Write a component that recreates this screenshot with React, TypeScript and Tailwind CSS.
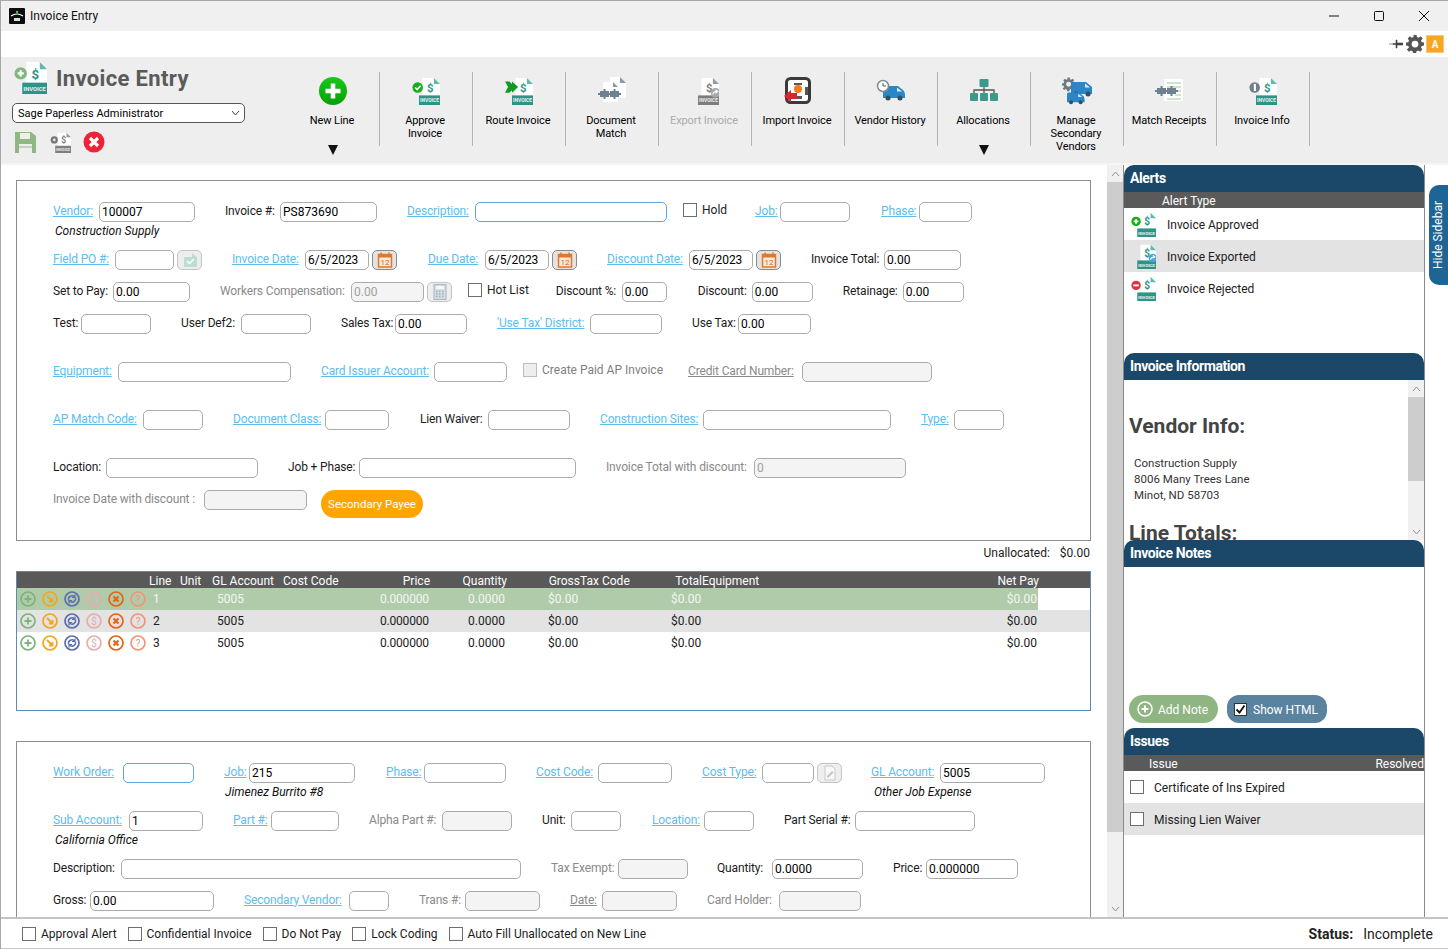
import React from "react";

const FONT = "[font-family:Roboto,'Liberation_Sans',sans-serif]";

function Doc({ badge, gray, size = 28 }: { badge?: React.ReactNode; gray?: boolean; size?: number }) {
  const c = gray ? "#7d7d7d" : "#2f9488";
  return (
    <svg width={size} height={size} viewBox="0 0 32 32">
      <path d="M12 1h13l7 7v15H12z" fill="#fff" />
      <path d="M25 1l7 7h-7z" fill={gray ? "#9a9a9a" : "#5fb8ab"} />
      <text x="17" y="17" fontSize="13" fontWeight="700" fill={c} fontFamily="Roboto">$</text>
      <rect x="8" y="21" width="24" height="11" fill={c} />
      <text x="20" y="29" fontSize="5.6" fontWeight="700" fill="#e8f4f2" textAnchor="middle" fontFamily="Roboto">INVOICE</text>
      {badge}
    </svg>
  );
}

const plusBadge = (col: string) => (
  <g>
    <circle cx="6.5" cy="12" r="6" fill={col} />
    <path d="M3.5 12h6M6.5 9v6" stroke="#fff" strokeWidth="2.2" />
  </g>
);
const checkBadge = (
  <g>
    <circle cx="6.5" cy="12" r="6" fill="#12b012" />
    <path d="M3.5 12l2.4 2.4 4-4.4" stroke="#fff" strokeWidth="2" fill="none" />
  </g>
);
const minusBadge = (
  <g>
    <circle cx="6.5" cy="12" r="6" fill="#e0323c" />
    <path d="M3 12h7" stroke="#fff" strokeWidth="2.4" />
  </g>
);
const routeBadge = (
  <path d="M0 5h5l3 3V5l7 6.500L8 18v-3l-3 3H0l3.500-6.500z" fill="#109a20" />
);
const infoBadge = (
  <g>
    <circle cx="6.5" cy="12" r="6" fill="#6f7f8c" />
    <rect x="5.5" y="8" width="2.4" height="8" fill="#fff" />
  </g>
);
const exportArrow = (col: string) => (
  <g>
    <circle cx="28" cy="18" r="5.5" fill={col} />
    <path d="M25 20c.5-3 2.500-3.500 4.500-3.500M28 14.500l2.500 2-2.500 2" stroke="#fff" strokeWidth="1.300" fill="none" />
  </g>
);

function Puzzle({ x = 0, y = 0 }: { x?: number; y?: number }) {
  return (
    <g transform={`translate(${x} ${y})`} fill="#6f8090">
      <path d="M0 2h3.500v-2h2v2h3.500v2h2v2h-2v2h-3.500v2h-2v-2h-3.500v-2h-2v-2h2z" />
      <path d="M10 2h3.500v-2h2v2h3.500v2h2v2h-2v2h-3.500v2h-2v-2h-3.500z" />
    </g>
  );
}

function DocMatch() {
  return (
    <svg width="28" height="28" viewBox="0 0 28 28">
      <path d="M12 0h10l6 6v15H12z" fill="#fff" />
      <path d="M22 0l6 6h-6z" fill="#8a9aa6" />
      <path d="M5 5h10l5 5v15H5z" fill="#fff" />
      <path d="M15 5l5 5h-5z" fill="#8a9aa6" />
      <Puzzle x={2} y={12} />
    </svg>
  );
}
function ImportIcon() {
  return (
    <svg width="28" height="28" viewBox="0 0 28 28">
      <rect x="2.500" y="1.500" width="23" height="24" rx="4" fill="#fff" stroke="#3a3a3a" strokeWidth="3" />
      <path d="M10 6h8v4h6v8h-6v4h-8z" fill="#3a3a3a" opacity="0.85" />
      <rect x="8" y="8" width="13" height="11" fill="#fff" />
      <circle cx="14" cy="12" r="4" fill="#f07d1a" />
      <path d="M0 19l7-6v3h6v6H7v3z" fill="#d8262c" />
    </svg>
  );
}
function Van({ x = 0, y = 0, s = 1 }: { x?: number; y?: number; s?: number }) {
  return (
    <g transform={`translate(${x} ${y}) scale(${s})`}>
      <path d="M0 4q0-2 2-2h13l6 5 1 3v4H0z" fill="#2a86c6" />
      <path d="M14 3.500l5 4h-5z" fill="#d6edf8" />
      <circle cx="5" cy="14" r="2.500" fill="#33505f" />
      <circle cx="17" cy="14" r="2.500" fill="#33505f" />
    </g>
  );
}
function VendorHist() {
  return (
    <svg width="30" height="28" viewBox="0 0 30 28">
      <Van x={7} y={7} />
      <circle cx="7" cy="9" r="5.500" fill="#fff" stroke="#7f8c92" strokeWidth="1.500" />
      <path d="M7 6v3h3" stroke="#555" strokeWidth="1" fill="none" />
    </svg>
  );
}
function Alloc() {
  return (
    <svg width="28" height="24" viewBox="0 0 28 24">
      <g fill="#3c9a8c">
        <rect x="9.500" y="0" width="9" height="8" rx="1" />
        <rect x="0" y="14" width="8" height="8" rx="1" />
        <rect x="10" y="14" width="8" height="8" rx="1" />
        <rect x="20" y="14" width="8" height="8" rx="1" />
      </g>
      <path d="M14 8v6M4 14v-3h20v3" stroke="#555" strokeWidth="1.300" fill="none" />
    </svg>
  );
}
function Gear({ size, col }: { size: number; col: string }) {
  return (
    <svg width={size} height={size} viewBox="0 0 24 24">
      <path d="M10 1h4l.6 3 2.300 1 2.600-1.700 2.800 2.800L20 8.700l1 2.300 3 .6v3.800l-3 .6-1 2.300 1.700 2.600-2.800 2.800-2.600-1.700-2.300 1-.6 3h-4l-.6-3-2.300-1-2.600 1.700-2.800-2.800L4 18.300 3 16l-3-.6v-3.800l3-.6 1-2.300L2.300 6.100l2.800-2.800L7.700 5l2.300-1z" fill={col} transform="translate(0 -1.500)" />
      <circle cx="12" cy="12" r="4.500" fill="#fff" />
    </svg>
  );
}
function SecVendors() {
  return (
    <svg width="30" height="28" viewBox="0 0 30 28">
      <g transform="translate(0 0) scale(0.55)">
        <path d="M10 1h4l.6 3 2.300 1 2.600-1.700 2.800 2.800L20 8.700l1 2.300 3 .6v3.800l-3 .6-1 2.300 1.700 2.600-2.800 2.800-2.600-1.700-2.300 1-.6 3h-4l-.6-3-2.300-1-2.600 1.700-2.800-2.800L4 18.300 3 16l-3-.6v-3.800l3-.6 1-2.300L2.300 6.100l2.800-2.800L7.700 5l2.300-1z" fill="#6d7a80" />
        <circle cx="12" cy="13" r="4.500" fill="#eee" />
      </g>
      <Van x={9} y={3} />
      <Van x={5} y={14} s={0.8} />
    </svg>
  );
}
function Receipts() {
  return (
    <svg width="30" height="26" viewBox="0 0 30 26">
      <rect x="9" y="1" width="19" height="22" fill="#fff" />
      <g stroke="#9ccb94" strokeWidth="1.200">
        <path d="M12 5h14M12 9h14M20 13h6M20 17h6M12 21h14" />
      </g>
      <Puzzle x={2} y={8} />
    </svg>
  );
}

function Tool({ label, dim, arrow, children }: { label: React.ReactNode; dim?: boolean; arrow?: boolean; children: React.ReactNode }) {
  return (
    <div className="relative w-[93px] h-[74px] shrink-0 border-r border-[#b4b4b4] flex flex-col items-center text-center">
      <div className="h-[28px] mt-[5px] flex items-center justify-center">{children}</div>
      <div className={`mt-[9px] leading-[13px] pl-[2px] pr-[4px] text-[11px] tracking-[-0.1px] ${dim ? "text-[#ababab]" : "text-black"}`}>{label}</div>
      {arrow && (
        <svg className="absolute left-[41px] top-[73px]" width="10" height="10" viewBox="0 0 10 10">
          <path d="M0 0h10L5 10z" fill="#111" />
        </svg>
      )}
    </div>
  );
}

function Field({ m, lw, label, link, iw, value, disabled, focus, under }: {
  m?: string; lw: string; label: string; link?: boolean; iw: string; value?: string; disabled?: boolean; focus?: boolean; under?: boolean;
}) {
  return (
    <div className={`flex items-center h-5 shrink-0 ${m ?? ""}`}>
      <span className={`${lw} pb-[2px] whitespace-nowrap shrink-0 tracking-[-0.15px] ${link ? "text-[#5cbdee] underline" : disabled ? "text-[#8a8a8a]" : "text-[#1c1c1c]"} ${under ? "underline" : ""}`}>{label}</span>
      <input
        readOnly
        value={value ?? ""}
        className={`${iw} h-5 shrink-0 rounded-[5px] border px-[2px] outline-none ${FONT} text-[12px] ${focus ? "border-[#5ea6dd]" : "border-[#ababab]"} ${disabled ? "bg-[#f4f4f4] text-[#a0a0a0]" : "bg-white text-black"}`}
      />
    </div>
  );
}

function IconBtn({ m, kind }: { m: string; kind: "po" | "cal" | "calc" | "doc" }) {
  return (
    <div className={`${m} w-[25px] h-5 shrink-0 rounded-[5px] border flex items-center justify-center ${kind === "cal" ? "border-[#8a8a8a] bg-[#e4e4e4]" : "border-[#c4c4c4] bg-[#eeeeee]"}`}>
      {kind === "cal" && (
        <svg width="16" height="16" viewBox="0 0 16 16">
          <rect x="1.500" y="2.500" width="13" height="12.500" fill="#fbe9dc" stroke="#e2772b" strokeWidth="1.500" />
          <rect x="1" y="2" width="14" height="3.500" fill="#e2772b" />
          <path d="M4 0.500v3M12 0.500v3" stroke="#e2772b" strokeWidth="1.500" />
          <text x="8" y="13" fontSize="8" fill="#c9651f" textAnchor="middle" fontFamily="Roboto">12</text>
        </svg>
      )}
      {kind === "po" && (
        <svg width="16" height="16" viewBox="0 0 16 16">
          <path d="M2 5h8V1l5 4v10H2z" fill="#bcdcd6" />
          <path d="M5 9l2.500 2.500L12 7" stroke="#fff" strokeWidth="1.500" fill="none" />
        </svg>
      )}
      {kind === "calc" && (
        <svg width="14" height="16" viewBox="0 0 14 16">
          <rect x="1" y="0.500" width="12" height="15" fill="#d5dde2" stroke="#a8b6c0" />
          <rect x="3" y="2" width="8" height="3" fill="#f4f6f7" />
          <path d="M3 7.500h8M3 10h8M3 12.500h8" stroke="#9fb0bb" strokeDasharray="1.500 1.500" strokeWidth="1.500" />
        </svg>
      )}
      {kind === "doc" && (
        <svg width="14" height="16" viewBox="0 0 14 16">
          <path d="M2 1h7l3 3v11H2z" fill="#f8f8f8" stroke="#c8c8c8" />
          <path d="M4 11l5-5 1.500 1.500-5 5H4z" fill="#c4c4c4" />
        </svg>
      )}
    </div>
  );
}

function Check({ m, label, dim, box = "border-[#6e6e6e] bg-white", lp = "" }: { m?: string; label?: string; dim?: boolean; box?: string; lp?: string }) {
  return (
    <div className={`flex items-center shrink-0 ${m ?? ""}`}>
      <span className={`w-[14px] h-[14px] border block shrink-0 ${box}`} />
      {label && <span className={`ml-[5px] whitespace-nowrap ${lp} ${dim ? "text-[#7f7f7f]" : "text-[#1c1c1c]"}`}>{label}</span>}
    </div>
  );
}

function Row({ m, children }: { m: string; children: React.ReactNode }) {
  return <div className={`flex items-center h-5 pl-[36px] ${m}`}>{children}</div>;
}

function RowIcon({ col, children }: { col: string; children?: React.ReactNode }) {
  return (
    <svg width="16" height="16" viewBox="0 0 16 16" className="shrink-0">
      <circle cx="8" cy="8" r="7" fill="none" stroke={col} strokeWidth="1.700" />
      <g stroke={col} fill="none" strokeWidth="1.800">{children}</g>
    </svg>
  );
}

function RowIcons() {
  return (
    <div className="flex gap-[6px] pl-[3px] w-[130px] shrink-0">
      <RowIcon col="#7db47a"><path d="M4.500 8h7M8 4.500v7" /></RowIcon>
      <RowIcon col="#f3a51e"><path d="M5 5l5 5M7 10.500h3.500V7" /></RowIcon>
      <RowIcon col="#5c6dae">
        <path d="M4.500 9a3.500 3.500 0 0 1 6-3M11.500 7a3.500 3.500 0 0 1-6 3" strokeWidth="1.500" />
        <path d="M11 3.500v3H8M5 12.500v-3h3" strokeWidth="1.200" />
      </RowIcon>
      <RowIcon col="#e5aeae">
        <text x="8" y="11.500" fontSize="10" textAnchor="middle" fill="#e5aeae" stroke="none" fontFamily="Roboto">$</text>
      </RowIcon>
      <RowIcon col="#e2661a"><path d="M5.500 5.500l5 5M10.500 5.500l-5 5" strokeWidth="2.200" /></RowIcon>
      <RowIcon col="#f0957a">
        <text x="8" y="11.500" fontSize="10" textAnchor="middle" fill="#f0957a" stroke="none" fontFamily="Roboto">?</text>
      </RowIcon>
    </div>
  );
}

function GridRow({ n, cls, fill }: { n: string; cls: string; fill: string }) {
  return (
    <div className={`flex items-center h-[22px] ${cls}`}>
      <div className={`flex items-center w-[1021px] h-full shrink-0 ${fill}`}>
        <RowIcons />
        <span className="w-[7px] ml-[6px] shrink-0">{n}</span>
        <span className="ml-[57px] w-[40px] shrink-0">5005</span>
        <span className="ml-[123px] w-[48px] shrink-0 tracking-[-0.2px]">0.000000</span>
        <span className="ml-[40px] w-[37px] shrink-0 text-right">0.0000</span>
        <span className="ml-[43px] w-[40px] shrink-0">$0.00</span>
        <span className="ml-[83px] w-[40px] shrink-0">$0.00</span>
        <span className="ml-[286px] w-[40px] shrink-0 text-right">$0.00</span>
      </div>
    </div>
  );
}

function SideHead({ children }: { children: React.ReactNode }) {
  return (
    <div className="h-[27px] shrink-0 bg-[#1b4868] rounded-t-[10px] flex items-center pl-[6px] text-white font-bold text-[14px] tracking-[-0.4px]">
      {children}
    </div>
  );
}

function AlertRow({ label, badge, alt }: { label: string; badge: React.ReactNode; alt?: boolean }) {
  return (
    <div className={`h-8 flex items-center pl-[7px] ${alt ? "bg-[#e3e3e3]" : ""}`}>
      <Doc size={25} badge={badge} />
      <span className="ml-[11px] pt-[2px] text-[#1c1c1c]">{label}</span>
    </div>
  );
}

function IssueRow({ label, alt }: { label: string; alt?: boolean }) {
  return (
    <div className={`h-8 flex items-center pl-[6px] ${alt ? "bg-[#e3e3e3]" : ""}`}>
      <Check />
      <span className="ml-[10px] pt-[2px] text-[#1c1c1c]">{label}</span>
    </div>
  );
}

function Chevron({ up }: { up?: boolean }) {
  return (
    <svg width="9" height="6" viewBox="0 0 9 6">
      <path d={up ? "M1 5l3.500-4L8 5" : "M1 1l3.500 4L8 1"} fill="none" stroke="#8f8f8f" />
    </svg>
  );
}

export default function App() {
  return (
    <div className={`w-[1448px] h-[949px] overflow-hidden flex flex-col bg-white border-t border-l border-[#a8a8a8] text-[12px] leading-[15px] ${FONT}`}>
      {/* Title bar */}
      <div className="h-[30px] shrink-0 bg-[#f0f0f0] flex items-center pl-[8px]">
        <svg width="16" height="16" viewBox="0 0 16 16">
          <rect width="16" height="16" rx="1" fill="#0c0c0c" />
          <path d="M2 8q6-4 12 0" stroke="#fff" strokeWidth="1.200" fill="none" />
          <circle cx="8" cy="4" r="1.200" fill="#3fbf5f" />
          <rect x="5" y="10" width="6" height="3" fill="#ddd" />
        </svg>
        <span className="ml-[5px] text-[#111]">Invoice Entry</span>
        <div className="ml-auto flex items-center pr-[19px] gap-[35px]">
          <svg width="10" height="10" viewBox="0 0 10 10"><path d="M0 5h10" stroke="#111" /></svg>
          <svg width="10" height="10" viewBox="0 0 10 10"><rect x="0.500" y="0.500" width="9" height="9" rx="1" fill="none" stroke="#111" /></svg>
          <svg width="10" height="10" viewBox="0 0 10 10"><path d="M0 0l10 10M10 0L0 10" stroke="#111" /></svg>
        </div>
      </div>
      {/* Strip */}
      <div className="h-[26px] shrink-0 bg-white flex items-center justify-end pr-[4px]">
        <svg width="14" height="10" viewBox="0 0 14 10"><path d="M0 5h4M4 4.500h3V1h1v3l6 0v2H8v3H7V5.500H4z" fill="#444" stroke="#444" strokeWidth="0.600" /></svg>
        <span className="ml-[3px] flex"><Gear size={18} col="#555" /></span>
        <span className="ml-[2px] w-[18px] h-[18px] bg-[#f5a623] flex items-center justify-center text-white text-[10px] font-bold border border-[#f8c878]">A</span>
      </div>
      {/* Toolbar */}
      <div className="h-[108px] shrink-0 bg-[#eeeeee] flex border-b-[2px] border-[#f5f5f5]">
        <div className="w-[286px] shrink-0 h-full pl-[11px] relative">
          <div className="flex items-start h-[46px] pt-[4px]">
            <span className="ml-[2px] flex"><Doc size={33} badge={plusBadge("#7fb77f")} /></span>
            <span className="ml-[9px] mt-[5px] text-[22px] font-bold text-[#5a5a5a] leading-[26px] tracking-[0.35px]">Invoice Entry</span>
          </div>
          <div className="w-[233px] h-5 rounded-[5px] border border-[#555] bg-white flex items-center pl-[5px] text-black text-[11px]">
            Sage Paperless Administrator
            <svg className="ml-auto mr-[4px]" width="9" height="6" viewBox="0 0 9 6"><path d="M1 1l3.500 4L8 1" fill="none" stroke="#444" /></svg>
          </div>
          <div className="flex items-center mt-[8px] pl-[3px]">
            <svg width="21" height="21" viewBox="0 0 21 21">
              <path d="M0 0h16l5 4v17H0z" fill="#8fb783" />
              <rect x="5" y="1" width="10" height="6" fill="#eee" />
              <rect x="4" y="12" width="13" height="9" fill="#eee" />
              <path d="M4 15h13" stroke="#8fb783" />
            </svg>
            <span className="ml-[14px] flex"><Doc size={21} gray badge={<g><circle cx="6.500" cy="12" r="5.500" fill="#777" /><circle cx="6.500" cy="12" r="2" fill="#eee" /></g>} /></span>
            <svg className="ml-[12px]" width="22" height="22" viewBox="0 0 22 22">
              <circle cx="11" cy="11" r="10.500" fill="#ee2338" />
              <path d="M7 7l8 8M15 7l-8 8" stroke="#fff" strokeWidth="3.200" />
            </svg>
          </div>
        </div>
        <div className="flex items-start pt-[15px]">
          <Tool label="New Line" arrow>
            <svg width="28" height="28" viewBox="0 0 28 28">
              <defs>
                <linearGradient id="g" x1="0" y1="0" x2="0" y2="1"><stop offset="0" stopColor="#18c818" /><stop offset="1" stopColor="#08a008" /></linearGradient>
              </defs>
              <circle cx="14" cy="14" r="14" fill="url(#g)" />
              <path d="M14 6.500v15M6.500 14h15" stroke="#fff" strokeWidth="4.500" />
            </svg>
          </Tool>
          <Tool label={<>Approve<br />Invoice</>}><Doc badge={checkBadge} /></Tool>
          <Tool label="Route Invoice"><Doc badge={routeBadge} /></Tool>
          <Tool label={<>Document<br />Match</>}><DocMatch /></Tool>
          <Tool label="Export Invoice" dim><Doc gray badge={exportArrow("#a8a8a8")} /></Tool>
          <Tool label="Import Invoice"><ImportIcon /></Tool>
          <Tool label="Vendor History"><VendorHist /></Tool>
          <Tool label="Allocations" arrow><Alloc /></Tool>
          <Tool label={<>Manage<br />Secondary<br />Vendors</>}><SecVendors /></Tool>
          <Tool label="Match Receipts"><Receipts /></Tool>
          <Tool label="Invoice Info"><Doc badge={infoBadge} /></Tool>
        </div>
      </div>

      {/* Main */}
      <div className="flex-1 min-h-0 flex overflow-hidden relative">
        <div className="w-[1106px] shrink-0 pl-[15px] pr-[16px] pt-[15px] overflow-hidden">
          {/* Form panel */}
          <div className="h-[361px] border border-[#8c8c8c] pt-[21px]">
            <Row m="">
              <Field lw="w-[46px]" label="Vendor:" link iw="w-[96px]" value="100007" />
              <Field m="ml-[30px]" lw="w-[55px]" label="Invoice #:" iw="w-[97px]" value="PS873690" />
              <Field m="ml-[30px]" lw="w-[68px]" label="Description:" link iw="w-[192px]" focus />
              <Check m="ml-[16px] mb-[4px]" label="Hold" />
              <Field m="ml-[28px]" lw="w-[25px]" label="Job:" link iw="w-[70px]" />
              <Field m="ml-[31px]" lw="w-[38px]" label="Phase:" link iw="w-[53px]" />
            </Row>
            <div className="h-[19px] pl-[38px] italic text-[#111] leading-[18px]">Construction Supply</div>
            <Row m="mt-[9px]">
              <Field lw="w-[62px]" label="Field PO #:" link iw="w-[59px]" />
              <IconBtn m="ml-[3px]" kind="po" />
              <Field m="ml-[30px]" lw="w-[73px]" label="Invoice Date:" link iw="w-[64px]" value="6/5/2023" />
              <IconBtn m="ml-[3px]" kind="cal" />
              <Field m="ml-[31px]" lw="w-[57px]" label="Due Date:" link iw="w-[64px]" value="6/5/2023" />
              <IconBtn m="ml-[3px]" kind="cal" />
              <Field m="ml-[30px]" lw="w-[82px]" label="Discount Date:" link iw="w-[64px]" value="6/5/2023" />
              <IconBtn m="ml-[3px]" kind="cal" />
              <Field m="ml-[30px]" lw="w-[73px]" label="Invoice Total:" iw="w-[77px]" value="0.00" />
            </Row>
            <Row m="mt-[12px]">
              <Field lw="w-[60px]" label="Set to Pay:" iw="w-[77px]" value="0.00" />
              <Field m="ml-[30px]" lw="w-[131px]" label="Workers Compensation:" disabled iw="w-[73px]" value="0.00" />
              <IconBtn m="ml-[3px]" kind="calc" />
              <Check m="ml-[16px] mb-[4px]" label="Hot List" />
              <Field m="ml-[27px]" lw="w-[66px]" label="Discount %:" iw="w-[45px]" value="0.00" />
              <Field m="ml-[31px]" lw="w-[54px]" label="Discount:" iw="w-[61px]" value="0.00" />
              <Field m="ml-[30px]" lw="w-[60px]" label="Retainage:" iw="w-[61px]" value="0.00" />
            </Row>
            <Row m="mt-[12px]">
              <Field lw="w-[28px]" label="Test:" iw="w-[70px]" />
              <Field m="ml-[30px]" lw="w-[60px]" label="User Def2:" iw="w-[70px]" />
              <Field m="ml-[30px]" lw="w-[54px]" label="Sales Tax:" iw="w-[72px]" value="0.00" />
              <Field m="ml-[30px]" lw="w-[93px]" label="'Use Tax' District:" link iw="w-[72px]" />
              <Field m="ml-[30px]" lw="w-[46px]" label="Use Tax:" iw="w-[73px]" value="0.00" />
            </Row>
            <Row m="mt-[28px]">
              <Field lw="w-[65px]" label="Equipment:" link iw="w-[173px]" />
              <Field m="ml-[30px]" lw="w-[113px]" label="Card Issuer Account:" link iw="w-[73px]" />
              <Check m="ml-[16px] mb-[4px]" label="Create Paid AP Invoice" dim box="border-[#bdbdbd] bg-[#eeeeee]" />
              <Field m="ml-[25px]" lw="w-[114px]" label="Credit Card Number:" disabled under iw="w-[130px]" />
            </Row>
            <Row m="mt-[28px]">
              <Field lw="w-[90px]" label="AP Match Code:" link iw="w-[60px]" />
              <Field m="ml-[30px]" lw="w-[92px]" label="Document Class:" link iw="w-[64px]" />
              <Field m="ml-[31px]" lw="w-[68px]" label="Lien Waiver:" iw="w-[82px]" />
              <Field m="ml-[30px]" lw="w-[103px]" label="Construction Sites:" link iw="w-[188px]" />
              <Field m="ml-[30px]" lw="w-[33px]" label="Type:" link iw="w-[50px]" />
            </Row>
            <Row m="mt-[28px]">
              <Field lw="w-[53px]" label="Location:" iw="w-[152px]" />
              <Field m="ml-[30px]" lw="w-[71px]" label="Job + Phase:" iw="w-[217px]" />
              <Field m="ml-[30px]" lw="w-[148px]" label="Invoice Total with discount:" disabled iw="w-[152px]" value="0" />
            </Row>
            <div className="flex items-start pl-[36px] mt-[12px]">
              <Field lw="w-[151px]" label="Invoice Date with discount :" disabled iw="w-[103px]" />
              <div className="ml-[14px] w-[102px] h-[28px] pt-[1px] rounded-[14px] bg-[#ffa500] text-white text-[11.5px] flex items-center justify-center">Secondary Payee</div>
            </div>
          </div>

          <div className="h-[30px] flex items-center justify-end text-[#1c1c1c] pr-[1px] pb-[5px]">
            <span>Unallocated:</span>
            <span className="ml-[10px]">$0.00</span>
          </div>

          {/* Grid */}
          <div className="h-[140px] border border-[#5d8cb3]">
            <div className="h-[16px] bg-[#595959] flex items-center text-white whitespace-nowrap pt-[2px]">
              <span className="ml-[132px] w-[31px] shrink-0">Line</span>
              <span className="w-[32px] shrink-0">Unit</span>
              <span className="w-[71px] shrink-0">GL Account</span>
              <span className="w-[60px] shrink-0">Cost Code</span>
              <span className="w-[87px] shrink-0 text-right">Price</span>
              <span className="w-[77px] shrink-0 text-right">Quantity</span>
              <span className="w-[73px] shrink-0 text-right">Gross</span>
              <span className="w-[83px] shrink-0">Tax Code</span>
              <span className="w-[39px] shrink-0 text-right">Total</span>
              <span className="w-[60px] shrink-0">Equipment</span>
              <span className="ml-[217px] w-[60px] shrink-0 text-right">Net Pay</span>
            </div>
            <GridRow n="1" cls="" fill="bg-[#b0cbaa] text-[#f3f7f1]" />
            <GridRow n="2" cls="bg-[#e3e3e3]" fill="text-[#222]" />
            <GridRow n="3" cls="" fill="text-[#222]" />
          </div>

          {/* Line panel */}
          <div className="h-[200px] mt-[30px] border border-[#8c8c8c] pt-[21px]">
            <Row m="">
              <Field lw="w-[70px]" label="Work Order:" link iw="w-[71px]" focus />
              <Field m="ml-[30px]" lw="w-[25px]" label="Job:" link iw="w-[106px]" value="215" />
              <Field m="ml-[31px]" lw="w-[38px]" label="Phase:" link iw="w-[82px]" />
              <Field m="ml-[30px]" lw="w-[62px]" label="Cost Code:" link iw="w-[74px]" />
              <Field m="ml-[30px]" lw="w-[60px]" label="Cost Type:" link iw="w-[52px]" />
              <IconBtn m="ml-[3px]" kind="doc" />
              <Field m="ml-[29px]" lw="w-[69px]" label="GL Account:" link iw="w-[105px]" value="5005" />
            </Row>
            <div className="h-[19px] flex italic text-[#111] leading-[18px]">
              <span className="ml-[208px] w-[649px]">Jimenez Burrito #8</span>
              <span>Other Job Expense</span>
            </div>
            <Row m="mt-[9px]">
              <Field lw="w-[76px]" label="Sub Account:" link iw="w-[74px]" value="1" />
              <Field m="ml-[30px]" lw="w-[38px]" label="Part #:" link iw="w-[68px]" />
              <Field m="ml-[30px]" lw="w-[73px]" label="Alpha Part #:" disabled iw="w-[70px]" />
              <Field m="ml-[30px]" lw="w-[29px]" label="Unit:" iw="w-[50px]" />
              <Field m="ml-[31px]" lw="w-[52px]" label="Location:" link iw="w-[50px]" />
              <Field m="ml-[30px]" lw="w-[71px]" label="Part Serial #:" iw="w-[120px]" />
            </Row>
            <div className="h-[19px] pl-[38px] italic text-[#111] leading-[18px]">California Office</div>
            <Row m="mt-[9px]">
              <Field lw="w-[68px]" label="Description:" iw="w-[400px]" />
              <Field m="ml-[30px]" lw="w-[67px]" label="Tax Exempt:" disabled iw="w-[70px]" />
              <Field m="ml-[29px]" lw="w-[55px]" label="Quantity:" iw="w-[91px]" value="0.0000" />
              <Field m="ml-[30px]" lw="w-[33px]" label="Price:" iw="w-[92px]" value="0.000000" />
            </Row>
            <Row m="mt-[12px]">
              <Field lw="w-[37px]" label="Gross:" iw="w-[124px]" value="0.00" />
              <Field m="ml-[30px]" lw="w-[105px]" label="Secondary Vendor:" link iw="w-[40px]" />
              <Field m="ml-[30px]" lw="w-[46px]" label="Trans #:" disabled iw="w-[75px]" />
              <Field m="ml-[30px]" lw="w-[32px]" label="Date:" disabled under iw="w-[75px]" />
              <Field m="ml-[30px]" lw="w-[72px]" label="Card Holder:" disabled iw="w-[82px]" />
            </Row>
          </div>
        </div>

        {/* Scrollbar */}
        <div className="w-[16px] shrink-0 bg-[#f0f0f0] flex flex-col items-center">
          <div className="h-[17px] flex items-center"><Chevron up /></div>
          <div className="h-[650px] w-full bg-[#cdcdcd]" />
          <div className="mt-auto h-[17px] flex items-center"><Chevron /></div>
        </div>

        {/* Sidebar */}
        <div className="w-[302px] shrink-0 border-x border-[#8a8a8a] flex flex-col">
          <div className="h-[188px] shrink-0">
            <SideHead>Alerts</SideHead>
            <div className="h-[16px] bg-[#5a5a5a] text-white pl-[38px] leading-[18px]">Alert Type</div>
            <AlertRow label="Invoice Approved" badge={plusBadge("#12b012")} />
            <AlertRow label="Invoice Exported" alt badge={exportArrow("#4aa8e0")} />
            <AlertRow label="Invoice Rejected" badge={minusBadge} />
          </div>
          <div className="h-[187px] shrink-0 flex flex-col">
            <SideHead>Invoice Information</SideHead>
            <div className="flex-1 min-h-0 flex overflow-hidden">
              <div className="flex-1 pl-[5px] pt-[35px] overflow-hidden">
                <div className="text-[21px] font-bold text-[#444] leading-[22px]">Vendor Info:</div>
                <div className="pl-[5px] mt-[18px] leading-[16px] text-[#333] text-[11.5px]">
                  <div>Construction Supply</div>
                  <div>8006 Many Trees Lane</div>
                  <div>Minot, ND 58703</div>
                </div>
                <div className="text-[21px] font-bold text-[#444] leading-[22px] mt-[19px]">Line Totals:</div>
              </div>
              <div className="w-[16px] bg-[#f0f0f0] flex flex-col items-center shrink-0">
                <div className="h-[17px] flex items-center"><Chevron up /></div>
                <div className="h-[84px] w-full bg-[#cdcdcd]" />
                <div className="mt-auto h-[17px] flex items-center"><Chevron /></div>
              </div>
            </div>
          </div>
          <div className="h-[188px] shrink-0 flex flex-col">
            <SideHead>Invoice Notes</SideHead>
            <div className="mt-auto flex items-center pl-[5px] mb-[5px]">
              <div className="w-[89px] h-[28px] rounded-[14px] bg-[#8fb583] flex items-center pl-[8px] text-white">
                <svg width="16" height="16" viewBox="0 0 16 16">
                  <circle cx="8" cy="8" r="7" fill="none" stroke="#fff" strokeWidth="1.500" />
                  <path d="M8 4.500v7M4.500 8h7" stroke="#fff" strokeWidth="2" />
                </svg>
                <span className="ml-[5px] pt-[2px]">Add Note</span>
              </div>
              <div className="ml-[9px] w-[100px] h-[28px] rounded-[12px] bg-[#5a83a0] flex items-center pl-[7px] text-white">
                <span className="w-[13px] h-[13px] bg-white border border-[#333] flex items-center justify-center">
                  <svg width="11" height="11" viewBox="0 0 11 11"><path d="M1.500 5.500l3 3 5-7" stroke="#111" strokeWidth="1.800" fill="none" /></svg>
                </span>
                <span className="ml-[6px] pt-[2px]">Show HTML</span>
              </div>
            </div>
          </div>
          <div className="flex-1 min-h-0">
            <SideHead>Issues</SideHead>
            <div className="h-[16px] bg-[#5a5a5a] text-white flex justify-between pl-[25px] leading-[18px]">
              <span>Issue</span>
              <span>Resolved</span>
            </div>
            <IssueRow label="Certificate of Ins Expired" />
            <IssueRow label="Missing Lien Waiver" alt />
          </div>
        </div>

        {/* Hide Sidebar tab */}
        <div className="absolute left-[1428px] top-[20px] w-[19px] h-[100px] bg-[#1e6495] rounded-l-[10px] flex items-center justify-center text-white">
          <span className="[writing-mode:vertical-rl] rotate-180 whitespace-nowrap">Hide Sidebar</span>
        </div>
      </div>

      {/* Footer */}
      <div className="h-[32px] shrink-0 border-t-[2px] border-b border-[#c4c4c4] bg-white flex items-center pl-[21px]">
        <Check label="Approval Alert" lp="pt-[2px]" />
        <Check m="ml-[11px]" label="Confidential Invoice" lp="pt-[2px]" />
        <Check m="ml-[11px]" label="Do Not Pay" lp="pt-[2px]" />
        <Check m="ml-[11px]" label="Lock Coding" lp="pt-[2px]" />
        <Check m="ml-[11px]" label="Auto Fill Unallocated on New Line" lp="pt-[2px]" />
        <div className="ml-auto pr-[15px] flex items-center text-[14px] text-[#222] pt-[2px]">
          <span className="font-bold">Status:</span>
          <span className="ml-[10px]">Incomplete</span>
        </div>
      </div>
    </div>
  );
}
